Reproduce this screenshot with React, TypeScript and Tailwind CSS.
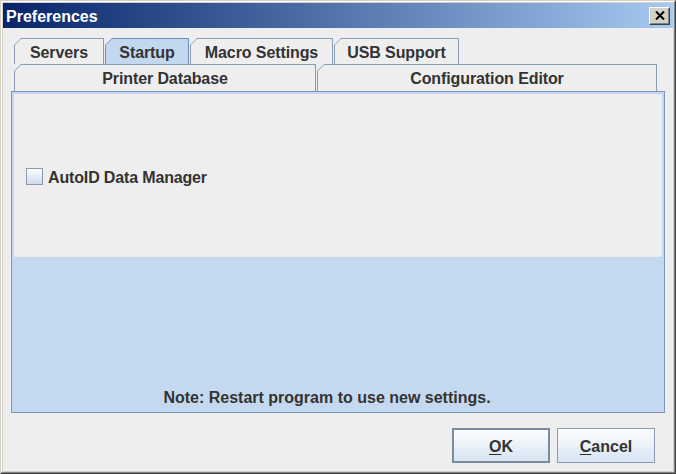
import type { ReactNode } from 'react';

const FONT = { fontFamily: '"Liberation Sans", Arial, sans-serif' };

function Tab({ label, className, selected = false }: { label: string; className: string; selected?: boolean }) {
  return (
    <div
      className={`${className} flex px-[1px] pt-[1px] ${
        selected ? 'bg-[#6d8dc4]' : 'bg-[#8b9cb6]'
      } [clip-path:polygon(7px_0,100%_0,100%_100%,0_100%,0_7px)]`}
    >
      <div
        className={`flex flex-1 items-center justify-center pt-[2px] text-[16px] font-bold tracking-[-0.1px] text-[#333333] ${
          selected ? 'bg-[#c3d8ef]' : 'bg-[#eeeeee]'
        } [clip-path:polygon(6px_0,100%_0,100%_100%,0_100%,0_6px)]`}
      >
        {label}
      </div>
    </div>
  );
}

function DlgButton({ children, focused = false }: { children: ReactNode; focused?: boolean }) {
  return (
    <button
      className={`flex h-[35px] w-[98px] items-center justify-center bg-gradient-to-b from-[#fdfeff] to-[#d7e4f2] pt-[2px] text-[16px] font-bold text-[#333333] ${
        focused ? 'border-2 border-[#7a8ba3]' : 'border border-[#8c9bb1]'
      }`}
    >
      {children}
    </button>
  );
}

export default function App() {
  return (
    <div style={FONT} className="h-[474px] w-[676px] border border-t-[#d4d0c8] border-l-[#d4d0c8] border-r-[#404040] border-b-[#404040] bg-[#d4d0c8]">
      <div className="flex h-full flex-col border border-t-white border-l-white border-r-[#808080] border-b-[#808080] p-[1px]">
        {/* title bar */}
        <div className="flex h-[25px] items-center justify-between bg-gradient-to-r from-[#0a246a] to-[#a6caf0] pl-[3px] pr-[3px]">
          <span className="pt-[2px] text-[16px] font-bold text-white">Preferences</span>
          <div className="border border-t-white border-l-white border-r-[#404040] border-b-[#404040] bg-[#d4d0c8]">
            <div className="flex h-[16px] w-[19px] items-center justify-center border border-t-[#d4d0c8] border-l-[#d4d0c8] border-r-[#808080] border-b-[#808080]">
              <svg width="10" height="9" viewBox="0 0 10 9">
                <path d="M1 0.5 L9 8.5 M9 0.5 L1 8.5" stroke="#000" strokeWidth="2" />
              </svg>
            </div>
          </div>
        </div>

        {/* body */}
        <div className="flex flex-1 flex-col bg-[#eeeeee] pl-[8px] pr-[5px] pt-[10px]">
          <div className="flex h-[26px] gap-[1px] pl-[3px]">
            <Tab label="Servers" className="w-[90px]" />
            <Tab label="Startup" className="w-[84px]" selected />
            <Tab label="Macro Settings" className="w-[143px]" />
            <Tab label="USB Support" className="w-[125px]" />
          </div>
          <div className="flex h-[27px] gap-[1px] pl-[3px]">
            <Tab label="Printer Database" className="w-[302px]" />
            <Tab label="Configuration Editor" className="w-[340px]" />
          </div>

          {/* tab content */}
          <div className="flex h-[322px] w-[654px] flex-col border border-[#7d95bf] bg-[#c4d9ef] p-[2px]">
            <div className="flex h-[163px] items-center gap-[5px] border-b border-[#e6ebf1] bg-[#eeeeee] pl-[12px] pt-[2px]">
              <div className="h-[17px] w-[17px] border border-[#8a99b0] bg-gradient-to-b from-[#fbfdff] to-[#cddcee]" />
              <span className="mt-[4px] text-[16px] font-bold tracking-[-0.15px] text-[#333333]">AutoID Data Manager</span>
            </div>
            <div className="flex flex-1 items-end justify-center pb-[0px] pr-[22px]">
              <span className="text-[16px] font-bold text-[#333333]">Note: Restart program to use new settings.</span>
            </div>
          </div>

          {/* buttons */}
          <div className="flex justify-end gap-[7px] pr-[13px] pt-[15px]">
            <DlgButton focused>
              <span className="underline underline-offset-2">O</span>K
            </DlgButton>
            <DlgButton>
              <span className="underline underline-offset-2">C</span>ancel
            </DlgButton>
          </div>
        </div>
      </div>
    </div>
  );
}
